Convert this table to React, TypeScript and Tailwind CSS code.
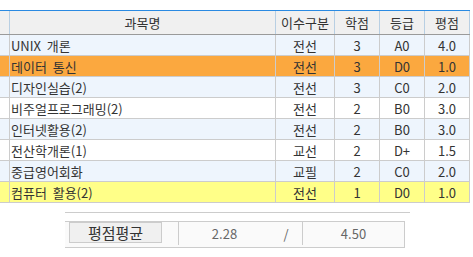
const rows = [
  { name: "UNIX 개론", type: "전선", credit: "3", grade: "A0", point: "4.0", bg: "bg-[#eef5fd]" },
  { name: "데이터 통신", type: "전선", credit: "3", grade: "D0", point: "1.0", bg: "bg-[#fba83f]" },
  { name: "디자인실습(2)", type: "전선", credit: "3", grade: "C0", point: "2.0", bg: "bg-[#eef5fd]" },
  { name: "비주얼프로그래밍(2)", type: "전선", credit: "2", grade: "B0", point: "3.0", bg: "bg-white" },
  { name: "인터넷활용(2)", type: "전선", credit: "2", grade: "B0", point: "3.0", bg: "bg-[#eef5fd]" },
  { name: "전산학개론(1)", type: "교선", credit: "2", grade: "D+", point: "1.5", bg: "bg-white" },
  { name: "중급영어회화", type: "교필", credit: "2", grade: "C0", point: "2.0", bg: "bg-[#eef5fd]" },
  { name: "컴퓨터 활용(2)", type: "전선", credit: "1", grade: "D0", point: "1.0", bg: "bg-[#ffff88]" },
];

export default function App() {
  return (
    <div
      className="w-[473px] h-[257px] bg-white overflow-hidden pt-[10px] text-[13px] leading-none text-[#333]"
      style={{ fontFamily: '"Noto Sans CJK KR", "Noto Sans", sans-serif' }}
    >
      <div className="w-[470px]">
        {/* header */}
        <div className="flex h-[25px] border-t border-[#2a8ae2] border-b border-b-[#9a9a9a] bg-[#f0f0f0]">
          <div className="w-[10px] border-r border-[#b8cfe3]" />
          <div className="w-[266px] border-r border-[#b8cfe3] flex items-center justify-center">과목명</div>
          <div className="w-[59px] border-r border-[#b8cfe3] flex items-center justify-center">이수구분</div>
          <div className="w-[45px] border-r border-[#b8cfe3] flex items-center justify-center">학점</div>
          <div className="w-[45px] border-r border-[#b8cfe3] flex items-center justify-center">등급</div>
          <div className="w-[45px] border-r border-[#b8cfe3] flex items-center justify-center">평점</div>
        </div>
        {rows.map((r) => (
          <div key={r.name} className={`flex h-[21px] border-b border-[#cccccc] ${r.bg}`}>
            <div className="w-[10px] border-r border-[#cccccc]" />
            <div className="w-[266px] border-r border-[#cccccc] flex items-center pl-[1px] whitespace-pre">{r.name.replace(" ", "  ")}</div>
            <div className="w-[59px] border-r border-[#cccccc] flex items-center justify-center">{r.type}</div>
            <div className="w-[45px] border-r border-[#cccccc] flex items-center justify-center">{r.credit}</div>
            <div className="w-[45px] border-r border-[#cccccc] flex items-center justify-center">{r.grade}</div>
            <div className="w-[45px] border-r border-[#cccccc] flex items-center justify-center">{r.point}</div>
          </div>
        ))}
      </div>

      {/* summary */}
      <div className="ml-[65px] mt-[9px] w-[345px] border-t border-[#cccccc]" />
      <div className="ml-[65px] mt-[8px] w-[340px] h-[27px] flex border-t border-b border-r border-[#cccccc] bg-[#fafafa] text-[#666]">
        <div className="w-[114px] border-r border-[#cccccc] flex items-start pl-[4px] mb-[2px]">
          <div className="w-[93px] h-[21px] border border-[#cccccc] bg-[#f0f0f0] text-[#333] text-[15px] flex items-center justify-center">
            평점평균
          </div>
        </div>
        <div className="w-[124px] border-r border-[#cccccc] flex items-center mb-[2px]">
          <div className="w-[91px] text-center">2.28</div>
          <div className="w-[32px] text-center">/</div>
        </div>
        <div className="flex-1 flex items-center justify-center mb-[2px]">4.50</div>
      </div>
    </div>
  );
}
